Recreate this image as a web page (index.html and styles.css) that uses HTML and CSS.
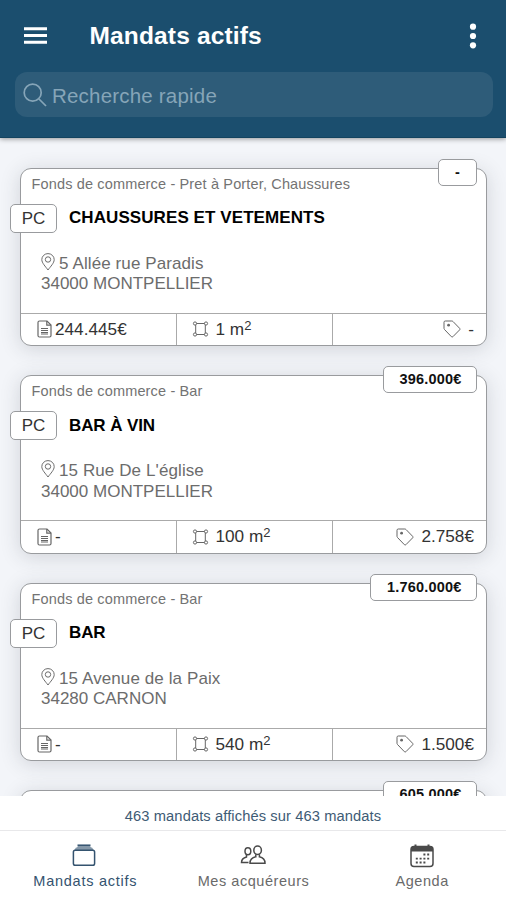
FILE: index.html
```html
<!DOCTYPE html>
<html lang="fr">
<head>
<meta charset="utf-8">
<title>Mandats actifs</title>
<link rel="stylesheet" href="styles.css">
</head>
<body>
<svg class="defs" width="0" height="0">
  <symbol id="pin" viewBox="0 0 14 18"><path d="M7 17C4.500 13.500.8 10 .8 6.600a6.200 6 0 0 1 12.400 0C13.200 10 9.500 13.500 7 17z"/><circle cx="7" cy="6.500" r="2.700"/></symbol>
  <symbol id="doc" viewBox="0 0 15 18"><path d="M2.500 1h7.500L14 5v10.500q0 1.500-1.500 1.500h-10Q1 17 1 15.500v-13Q1 1 2.500 1z"/><path d="M9.800 1v4.200H14M4 8.500h7M4 10.500h7M4 12.500h7M4 14h7"/></symbol>
  <symbol id="area" viewBox="0 0 16 16"><path d="M4 2.500h8M4 13.500h8M3.200 4v8M12.800 4v8"/><circle cx="2.500" cy="2.500" r="1.600"/><circle cx="13.500" cy="2.500" r="1.600"/><circle cx="2.500" cy="13.500" r="1.600"/><circle cx="13.500" cy="13.500" r="1.600"/></symbol>
  <symbol id="tag" viewBox="0 0 18 18"><path d="M2.300 1H8.800q.7 0 1.200.5l6.700 6.900q.6.700 0 1.400l-6.800 6.900q-.8.700-1.500 0L1.500 9.500Q1 9 1 8.300v-6Q1 1 2.300 1z"/><circle class="dot" cx="5.600" cy="5.200" r="1.400"/></symbol>
</svg>
<div class="app">
  <header class="header">
    <div class="bar">
      <svg class="menu" viewBox="0 0 23 17"><path d="M0 1.700h23M0 8.500h23M0 15.300h23"/></svg>
      <h1 class="title">Mandats actifs</h1>
      <svg class="more" viewBox="0 0 8 26"><circle cx="4" cy="3.700" r="3.100"/><circle cx="4" cy="13" r="3.100"/><circle cx="4" cy="22.300" r="3.100"/></svg>
    </div>
    <div class="search">
      <svg viewBox="0 0 24 24"><circle cx="9.700" cy="9.700" r="8.500"/><path d="M16 16l7 7"/></svg>
      <span>Recherche rapide</span>
    </div>
  </header>

  <main class="list">
    <article class="card">
      <div class="price none">-</div>
      <div class="category">Fonds de commerce - Pret à Porter, Chaussures</div>
      <div class="heading"><span class="badge">PC</span><h2>CHAUSSURES ET VETEMENTS</h2></div>
      <div class="address"><svg class="pin"><use href="#pin"/></svg><span class="street">5 Allée rue Paradis</span><br>34000 MONTPELLIER</div>
      <div class="facts">
        <div class="fact"><svg class="doc"><use href="#doc"/></svg>244.445€</div>
        <div class="fact"><svg class="area"><use href="#area"/></svg><span>1 m<sup>2</sup></span></div>
        <div class="fact end"><svg class="tag"><use href="#tag"/></svg>-</div>
      </div>
    </article>

    <article class="card">
      <div class="price">396.000€</div>
      <div class="category">Fonds de commerce - Bar</div>
      <div class="heading"><span class="badge">PC</span><h2 class="short">BAR À VIN</h2></div>
      <div class="address"><svg class="pin"><use href="#pin"/></svg><span class="street">15 Rue De L'église</span><br>34000 MONTPELLIER</div>
      <div class="facts">
        <div class="fact"><svg class="doc"><use href="#doc"/></svg>-</div>
        <div class="fact"><svg class="area"><use href="#area"/></svg><span>100 m<sup>2</sup></span></div>
        <div class="fact end"><svg class="tag"><use href="#tag"/></svg>2.758€</div>
      </div>
    </article>

    <article class="card">
      <div class="price">1.760.000€</div>
      <div class="category">Fonds de commerce - Bar</div>
      <div class="heading"><span class="badge">PC</span><h2 class="short">BAR</h2></div>
      <div class="address"><svg class="pin"><use href="#pin"/></svg><span class="street">15 Avenue de la Paix</span><br>34280 CARNON</div>
      <div class="facts">
        <div class="fact"><svg class="doc"><use href="#doc"/></svg>-</div>
        <div class="fact"><svg class="area"><use href="#area"/></svg><span>540 m<sup>2</sup></span></div>
        <div class="fact end"><svg class="tag"><use href="#tag"/></svg>1.500€</div>
      </div>
    </article>

    <article class="card">
      <div class="price">605.000€</div>
    </article>
  </main>

  <div class="status">463 mandats affichés sur 463 mandats</div>
  <nav class="tabs">
    <a class="tab active">
      <svg viewBox="0 0 24 24"><path class="fill soft" d="M6.500 1h11l1.500 2.500H5zM4 3.500h16L22 6.500H2z"/><path d="M5.500 1.200h13"/><rect x="1.400" y="6.200" width="21.200" height="15" rx="1.800"/></svg>
      <span class="wide">Mandats actifs</span>
    </a>
    <a class="tab">
      <svg class="people" viewBox="0 0 26 24"><ellipse cx="7.900" cy="7.300" rx="2.900" ry="3.500"/><path d="M6.500 10.800v2.200C3 14 1.500 15.500 1.500 18.500H8.500"/><ellipse cx="17.600" cy="6.200" rx="3.800" ry="4.200"/><path d="M15.800 10.200v2.600c-3.800.8-5.800 2.500-5.800 6.400h15c0-3.900-2-5.600-5.600-6.400v-2.600"/></svg>
      <span>Mes acquéreurs</span>
    </a>
    <a class="tab">
      <svg viewBox="0 0 24 24"><rect x="1" y="2.500" width="22" height="20" rx="3"/><path class="fill" d="M1 7.500V5q0-3 3-3h16q3 0 3 3v2.500zM4.500.5h2V3h-2zM17.500.5h2V3h-2z"/><path class="days" d="M13.400 10.500h6.500M5.800 14.700h14M5.800 18.500h10"/></svg>
      <span>Agenda</span>
    </a>
  </nav>
</div>
</body>
</html>
```

FILE: styles.css
```css
* { box-sizing: border-box; }

body {
  margin: 0;
  font-family: "Liberation Sans", Arial, sans-serif;
  color: #333;
}

svg { fill: none; stroke: currentColor; flex: none; }
.defs { position: absolute; }

.app {
  display: flex;
  flex-direction: column;
  height: 900px;
  overflow: hidden;
  background: #f3f5f9;
}

.header {
  flex: none;
  height: 137.500px;
  background: #1b4e6e;
  border-bottom: 1px solid #13435f;
  box-shadow: 0 1px 5px rgba(0, 0, 0, .4);
  z-index: 1;
}

.bar {
  display: flex;
  align-items: center;
  height: 72px;
  padding: 0 29px 1px 23.500px;
  color: #fff;
}
.menu { width: 23px; height: 17px; stroke-width: 2.900; }
.title {
  flex: 1;
  margin: 0 0 0 43px;
  font-size: 24.500px;
  line-height: 30px;
  letter-spacing: .15px;
}
.more { width: 8px; height: 26px; fill: #fff; stroke: none; }

.search {
  display: flex;
  align-items: center;
  gap: 5px;
  height: 45px;
  margin: 0 13.500px 0 15px;
  padding-left: 8px;
  border-radius: 12px;
  background: #2e5c79;
  color: #86a5b8;
  font-size: 20.500px;
  letter-spacing: .2px;
}
.search span { padding-top: 2px; }
.search svg { width: 24px; height: 24px; stroke-width: 1.700; }

.list {
  flex: 1;
  min-height: 0;
  overflow: hidden;
  padding: 30px 19px 0 20px;
}

.card {
  position: relative;
  display: flex;
  flex-direction: column;
  height: 178.500px;
  margin-bottom: 29px;
  border: 1.500px solid #999b9e;
  border-radius: 11px;
  background: #fff;
  box-shadow: 0 3px 20px rgba(40, 48, 60, .17);
}

.price {
  position: absolute;
  top: -10px;
  right: 9px;
  height: 27px;
  padding: 0 14.500px 0 15.500px;
  border: 1px solid #999b9e;
  border-radius: 5px;
  background: #fff;
  color: #111;
  font-size: 14.500px;
  font-weight: bold;
  line-height: 25px;
  letter-spacing: .2px;
}
.price.none { padding: 0 16px; }

.category {
  margin: 7px 0 0 10.500px;
  color: #737373;
  font-size: 14.500px;
  line-height: 17px;
  letter-spacing: .15px;
}

.heading {
  display: flex;
  align-items: center;
  margin: 11px 0 0 -11px;
}
.badge {
  width: 47px;
  height: 29px;
  border: 1px solid #999b9e;
  border-radius: 5px;
  background: #fff;
  font-size: 17px;
  line-height: 28px;
  text-align: center;
}
.heading h2 {
  margin: 0 0 0 12px;
  color: #000;
  font-size: 17px;
  line-height: 28px;
  letter-spacing: .08px;
}
.heading .short { letter-spacing: -.1px; }

.address {
  margin: 20px 0 0 20px;
  color: #6c6c6c;
  font-size: 17px;
  line-height: 20.500px;
}
.street { letter-spacing: .1px; }
.pin { width: 14px; height: 18px; margin-right: 4px; vertical-align: -2px; }

.facts {
  display: grid;
  grid-template-columns: 154.500px 156px 1fr;
  height: 32.500px;
  margin-top: auto;
  border-top: 1px solid #aaa;
}
.fact {
  display: flex;
  align-items: center;
  padding-left: 15px;
  font-size: 17.200px;
}
.fact + .fact { border-left: 1px solid #aaa; }
.fact sup { font-size: 13px; line-height: 0; vertical-align: 5px; }
.fact svg { color: #666; }
.end { justify-content: flex-end; padding-right: 12px; }
.fact .doc { width: 15px; height: 18px; margin: 0 3px 0 1px; stroke-width: 1.200; }
.area { width: 17px; height: 16px; margin-right: 7px; }
.tag { width: 18px; height: 18px; margin-right: 7px; }
.dot { fill: currentColor; stroke: none; }

.status {
  flex: none;
  height: 35px;
  border-bottom: 1px solid #e8e8ea;
  background: #fff;
  color: #3e5b75;
  font-size: 14.700px;
  line-height: 41px;
  letter-spacing: .1px;
  text-align: center;
  z-index: 1;
}

.tabs {
  flex: none;
  display: grid;
  grid-template-columns: repeat(3, 1fr);
  height: 69px;
  background: #fff;
  z-index: 1;
}
.tab {
  display: flex;
  flex-direction: column;
  align-items: center;
  padding-top: 13px;
  color: #6a6a6a;
  font-size: 14.500px;
  line-height: 17px;
  letter-spacing: .55px;
}
.tab span { padding-left: 1px; }
.tab svg { width: 24px; height: 24px; margin-bottom: 5px; color: #4a4a4a; stroke-width: 1.500; }
.tab .people { width: 26px; }
.tab.active, .tab.active svg { color: #34536f; }
.tab .wide { padding-left: 2px; letter-spacing: .75px; }
.fill { fill: currentColor; stroke: none; }
.soft { opacity: .6; }
.tab .days { stroke-width: 1.800; stroke-dasharray: 2 1.800; }
```
